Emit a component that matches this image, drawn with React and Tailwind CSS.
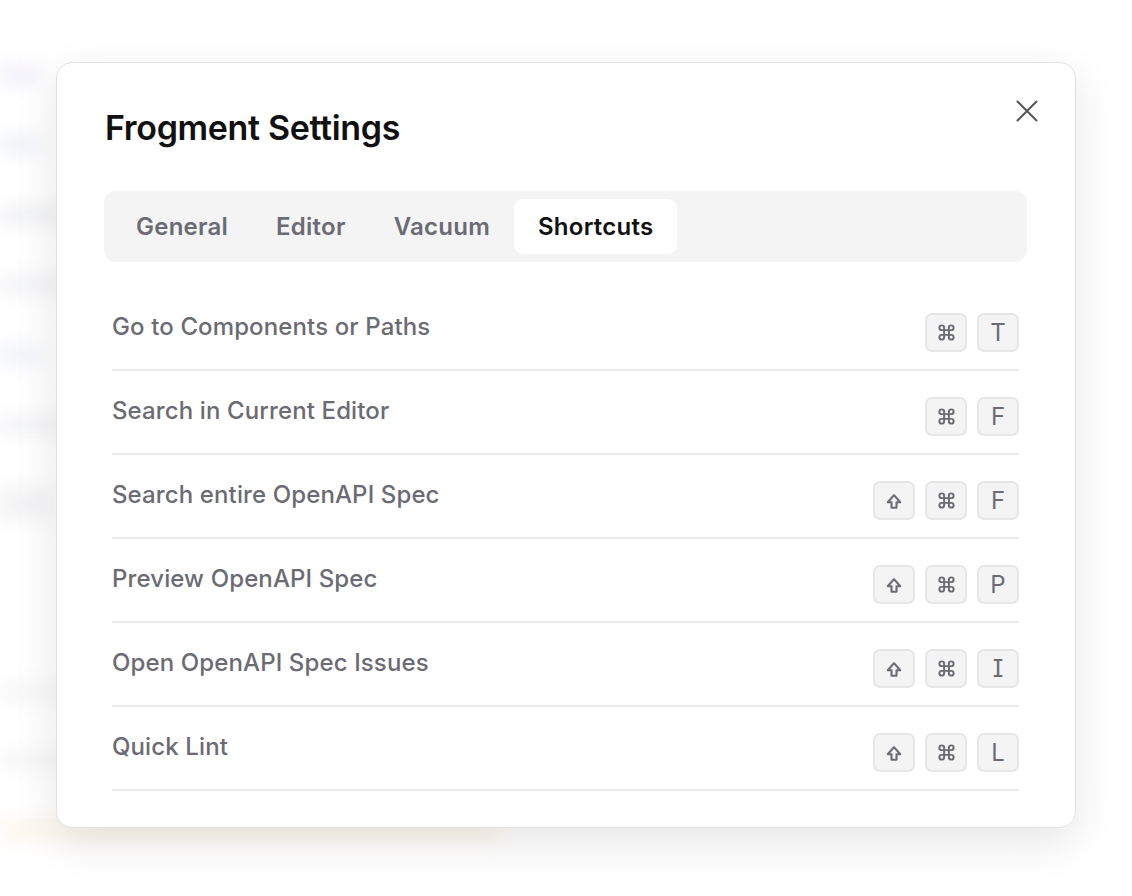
import React from "react";

const font = { fontFamily: "Inter, 'Noto Sans', sans-serif" };

function ShiftIcon() {
  return (
    <svg width="20" height="20" viewBox="0 0 24 24" fill="none" stroke="currentColor" strokeWidth="2.5" strokeLinejoin="round">
      <path d="M9 20v-6.5H4.5L12 5l7.5 8.5H15V20z" />
    </svg>
  );
}

function CmdIcon() {
  return (
    <svg width="19" height="19" viewBox="0 0 24 24" fill="none" stroke="currentColor" strokeWidth="2.5" strokeLinecap="round" strokeLinejoin="round">
      <path d="M15 6v12a3 3 0 1 0 3-3H6a3 3 0 1 0 3 3V6a3 3 0 1 0-3 3h12a3 3 0 1 0-3-3" />
    </svg>
  );
}

function Key({ children }) {
  return (
    <div className="w-[42px] h-[39px] rounded-[7px] border-2 border-[#e6e6e9] bg-[#f4f4f5] flex items-center justify-center text-[24px] leading-none text-[#6b6b74] font-normal">
      {children}
    </div>
  );
}

const rows = [
  { label: "Go to Components or Paths", keys: ["cmd", "T"] },
  { label: "Search in Current Editor", keys: ["cmd", "F"] },
  { label: "Search entire OpenAPI Spec", keys: ["shift", "cmd", "F"] },
  { label: "Preview OpenAPI Spec", keys: ["shift", "cmd", "P"] },
  { label: "Open OpenAPI Spec Issues", keys: ["shift", "cmd", "I"] },
  { label: "Quick Lint", keys: ["shift", "cmd", "L"] },
];

function renderKey(k) {
  if (k === "cmd") return <CmdIcon />;
  if (k === "shift") return <ShiftIcon />;
  if (k === "I") return <span className="[font-feature-settings:'cv08']">I</span>;
  return k;
}

export default function App() {
  return (
    <div className="relative w-[1132px] h-[896px] bg-white overflow-hidden" style={font}>
      {/* blurred background app */}
      <div className="flex flex-col gap-[52px] pt-[66px] blur-[9px] opacity-60">
        <div className="w-[40px] h-[18px] rounded bg-[#e9e4f5]" />
        <div className="w-[40px] h-[18px] rounded bg-[#e3e7f2]" />
        <div className="w-[60px] h-[18px] rounded bg-[#e6e7ec]" />
        <div className="w-[60px] h-[18px] rounded bg-[#eaebef]" />
        <div className="w-[40px] h-[18px] rounded bg-[#e4e7f3]" />
        <div className="w-[60px] h-[18px] rounded bg-[#eaebef]" />
        <div className="w-[50px] h-[34px] rounded bg-[#ececef]" />
        <div className="h-[60px]" />
        <div className="w-[60px] h-[16px] rounded bg-[#efeff1]" />
        <div className="w-[60px] h-[16px] rounded bg-[#efeff1]" />
        <div className="w-[500px] h-[20px] rounded bg-[#fbf1df]" />
      </div>

      {/* modal */}
      <div className="absolute left-[56px] top-[62px] w-[1020px] bg-white border border-[#e3e3e3] rounded-[16px] shadow-[0_14px_44px_rgba(0,0,0,0.10)] pl-[47px] pr-[48px] pt-[45px] pb-[36px]">
        <button className="absolute top-[37px] right-[37px] w-[22px] h-[22px] flex items-center justify-center text-[#555]">
          <svg width="22" height="22" viewBox="0 0 22 22" fill="none" stroke="currentColor" strokeWidth="2" strokeLinecap="round">
            <path d="M1.5 1.5l19 19M20.5 1.5l-19 19" />
          </svg>
        </button>

        <h1 className="text-[34px] leading-[40px] font-semibold tracking-[-0.01em] text-[#111111] pl-[1px]">
          Frogment Settings
        </h1>

        <div className="mt-[43px] h-[71px] rounded-[12px] bg-[#f4f4f5] p-2 flex">
          {["General", "Editor", "Vacuum", "Shortcuts"].map((t) => (
            <div
              key={t}
              className={
                "h-[55px] px-6 flex items-center rounded-[9px] text-[24px] font-semibold tracking-[0.01em] " +
                (t === "Shortcuts" ? "bg-white text-[#111111]" : "text-[#6b6b74]")
              }
            >
              {t}
            </div>
          ))}
        </div>

        <div className="mt-[25px] mx-2 flex flex-col">
          {rows.map((r) => (
            <div key={r.label} className="h-[84px] border-b-2 border-[#ebebed] flex justify-between items-start pt-[24px]">
              <div className="text-[24px] leading-[32px] font-medium tracking-[0.005em] text-[#6b6b74]">{r.label}</div>
              <div className="flex gap-[10px] mt-[2px]">
                {r.keys.map((k, i) => (
                  <Key key={i}>{renderKey(k)}</Key>
                ))}
              </div>
            </div>
          ))}
        </div>
      </div>
    </div>
  );
}
